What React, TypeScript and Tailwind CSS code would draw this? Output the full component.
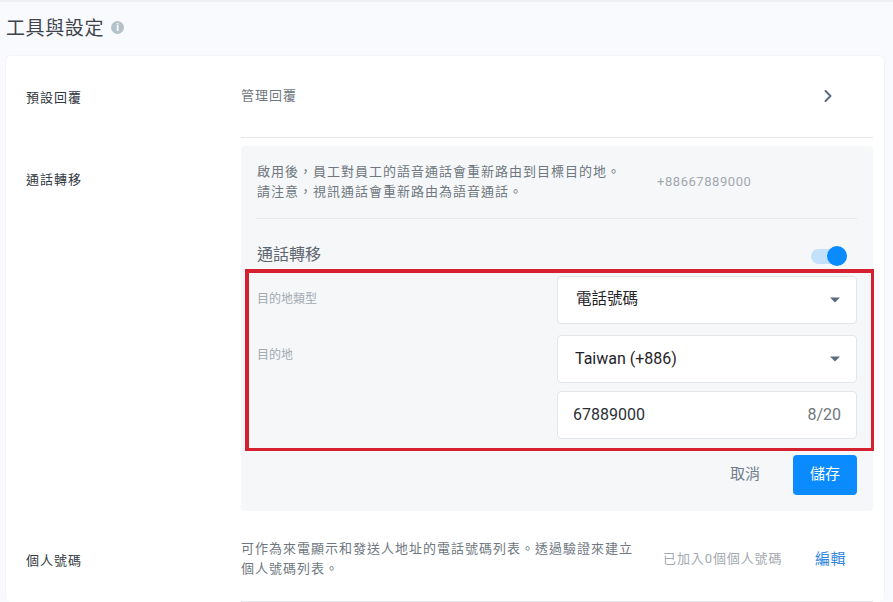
import React from 'react';
import { ChevronRight } from 'lucide-react';

const font = { fontFamily: 'Roboto, "Noto Sans CJK TC", sans-serif' };

const Caret = () => (
  <svg width="10" height="6" viewBox="0 0 10 6" className="shrink-0">
    <path d="M0 0.5h10L5 5.5z" fill="#5b6b82" />
  </svg>
);

const SelectBox: React.FC<{ value: string; cjk?: boolean }> = ({ value, cjk }) => (
  <div className="h-[48px] w-[300px] flex items-center justify-between pl-[17px] pr-[16px] bg-white border border-[#e2e5e9] rounded text-[16px] text-[#1f2329]">
    <span className={cjk ? 'pl-[1px] text-[15.5px]' : ''}>{value}</span>
    <Caret />
  </div>
);

export default function App() {
  return (
    <div style={font} className="w-[893px] h-[602px] overflow-hidden bg-[#f9fafd] relative">
      <div className="h-[2px] bg-[#eff0f4]" />
      <div className="h-[53px] pl-[6px] flex items-start pt-[15px] gap-[6px]">
        <h1 className="text-[19px] leading-[24px] text-[#3d444c] font-normal tracking-[0.6px]">工具與設定</h1>
        <span className="mt-[4px] ml-[1px] w-[13px] h-[13px] rounded-full bg-[#b4c2c9] text-white text-[10px] leading-[13px] font-bold text-center">i</span>
      </div>

      <div className="ml-[5px] w-[880px] h-[547px] bg-white rounded-md border border-[#f3f4f7] border-b-0 pl-[20px] pr-[11px]">
        {/* 預設回覆 */}
        <div className="flex h-[82px]">
          <div className="w-[215px] pt-[32px] text-[13px] leading-[20px] tracking-[1px] text-[#333a42]">預設回覆</div>
          <div className="flex-1 flex justify-between border-b border-[#e6e8eb] pt-[30px] pr-[36px]">
            <span className="text-[13px] leading-[20px] tracking-[1px] text-[#6f7780]">管理回覆</span>
            <ChevronRight size={20} strokeWidth={2.4} className="mr-[-1px] text-[#5b6b82]" />
          </div>
        </div>

        {/* 通話轉移 */}
        <div className="flex mt-[8px]">
          <div className="w-[215px] pt-[24px] text-[13px] leading-[20px] tracking-[1px] text-[#333a42]">通話轉移</div>
          <div className="w-[632px] h-[365px] bg-[#f5f7f9] rounded px-[16px] pt-[16px]">
            <div className="flex h-[57px] border-b border-[#e6e8eb] w-[601px] -ml-px">
              <div className="w-[401px] pl-px text-[13px] leading-[20px] tracking-[1px] text-[#6f7780]">
                <div>啟用後，員工對員工的語音通話會重新路由到目標目的地。</div>
                <div>請注意，視訊通話會重新路由為語音通話。</div>
              </div>
              <div className="text-[13px] leading-[40px] tracking-[0.55px] text-[#a3a9b0]">+88667889000</div>
            </div>

            <div className="flex items-center justify-between h-[36px] mt-[18px]">
              <span className="text-[16px] text-[#5f6770] leading-[20px]">通話轉移</span>
              <div className="relative w-[36px] h-[15px] rounded-full bg-[#c4e1fb] mr-[10px] mt-[2px]">
                <span className="absolute right-0 top-[-3px] w-[20px] h-[20px] rounded-full bg-[#0a8bff]" />
              </div>
            </div>

            <div className="flex justify-between mt-[3px]">
              <div className="text-[12px] leading-[16px] text-[#a3a9b0]">
                <div className="mt-[15px]">目的地類型</div>
                <div className="mt-[40px]">目的地</div>
              </div>
              <div className="flex flex-col">
                <SelectBox value="電話號碼" cjk />
                <div className="mt-[11px]">
                  <SelectBox value="Taiwan (+886)" />
                </div>
                <div className="mt-[8px] h-[48px] w-[300px] flex items-center justify-between pl-[15px] pr-[15px] bg-white border border-[#e2e5e9] rounded text-[16px] text-[#2b3037]">
                  <span>67889000</span>
                  <span className="text-[#6f7780]">8/20</span>
                </div>
              </div>
            </div>

            <div className="flex justify-end items-center mt-[16px]">
              <span className="text-[15px] text-[#6f7d8c] mr-[33px] mb-[2px]">取消</span>
              <button className="w-[64px] h-[40px] pb-[2px] rounded bg-[#0a8bff] text-white text-[15px]">儲存</button>
            </div>
          </div>
        </div>

        {/* 個人號碼 */}
        <div className="flex h-[91px]">
          <div className="w-[215px] pt-[40px] text-[13px] leading-[20px] tracking-[1px] text-[#333a42]">個人號碼</div>
          <div className="flex-1 flex border-b border-[#e6e8eb] pt-[28px]">
            <div className="w-[422px] text-[13px] leading-[20px] tracking-[1px] text-[#6f7780]">
              <div>可作為來電顯示和發送人地址的電話號碼列表。透過驗證來建立</div>
              <div>個人號碼列表。</div>
            </div>
            <div className="w-[152px] pt-[10px] text-[13px] leading-[20px] tracking-[0.9px] text-[#a3a9b0]">已加入0個個人號碼</div>
            <div className="pt-[9px] text-[15px] leading-[22px] text-[#2f86de] tracking-[0.5px]">編輯</div>
          </div>
        </div>
      </div>

      {/* annotation */}
      <div className="absolute left-[245px] top-[269px] w-[629px] h-[182px] border-[3px] border-t-[4px] border-l-[4px] border-[#d4202f] pointer-events-none" />
    </div>
  );
}
